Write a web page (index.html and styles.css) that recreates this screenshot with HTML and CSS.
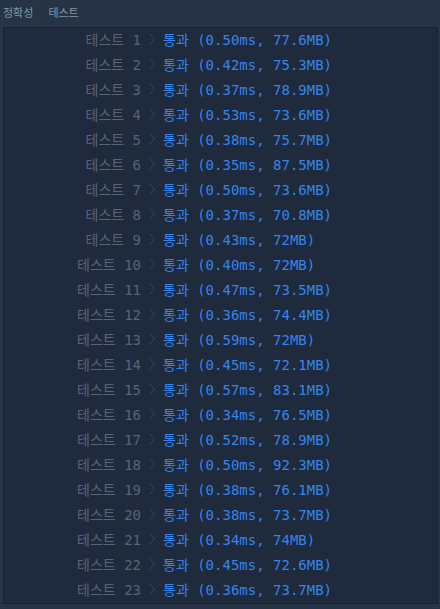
FILE: index.html
```html
<!DOCTYPE html>
<html lang="ko">
<head>
  <meta charset="UTF-8" />
  <title>채점 결과</title>
  <link rel="stylesheet" href="styles.css">
</head>
<body>

  <div class="tabs">
    <span class="tab">정확성</span>
    <span class="tab">테스트</span>
  </div>

  <div id="result">
    <div id="rows"></div>
  </div>

  <script>
    const results = [
      ["0.50", "77.6"], ["0.42", "75.3"], ["0.37", "78.9"], ["0.53", "73.6"],
      ["0.38", "75.7"], ["0.35", "87.5"], ["0.50", "73.6"], ["0.37", "70.8"],
      ["0.43", "72"], ["0.40", "72"], ["0.47", "73.5"], ["0.36", "74.4"],
      ["0.59", "72"], ["0.45", "72.1"], ["0.57", "83.1"], ["0.34", "76.5"],
      ["0.52", "78.9"], ["0.50", "92.3"], ["0.38", "76.1"], ["0.38", "73.7"],
      ["0.34", "74"], ["0.45", "72.6"], ["0.36", "73.7"]
    ];

    const chevron = '<svg class="chevron" width="6" height="12" viewBox="0 0 6 12"><polyline points="0.5,0.5 5.5,6 0.5,11.5" fill="none" stroke="currentColor" stroke-width="1"/></svg>';

    let html = "";
    results.forEach(function (r, i) {
      html += '<div class="row">' +
        '<span class="label">테스트 ' + (i + 1) + '</span>' +
        chevron +
        '<span class="pass">통과 (' + r[0] + 'ms, ' + r[1] + 'MB)</span>' +
        '</div>';
    });
    document.getElementById("rows").innerHTML = html;
  </script>
</body>
</html>
```

FILE: styles.css
```css
* { margin: 0; padding: 0; box-sizing: border-box; }
html, body {
  height: 100%;
  background: #263445;
  overflow: hidden;
}

.tabs {
  height: 27px;
  display: flex;
  gap: 15px;
  padding: 4px 0 0 3px;
  font-family: "Noto Sans CJK KR", sans-serif;
  font-size: 11px;
  color: #8796a7;
}

#result {
  margin: 0 2px 0 3px;
  background: #1f2a3c;
  border: 1px solid #152030;
  height: 577px;
}

.row {
  height: 25px;
  display: flex;
  align-items: center;
  padding-bottom: 4px;
  font-family: "DejaVu Sans Mono", "Noto Sans CJK KR", monospace;
  font-size: 14px;
}

.label {
  width: 137px;
  text-align: right;
  color: #566478;
}

.chevron {
  margin: 0 8px 0 8px;
  color: #3a4759;
}

.pass {
  color: #3385ee;
  white-space: pre;
}
```
